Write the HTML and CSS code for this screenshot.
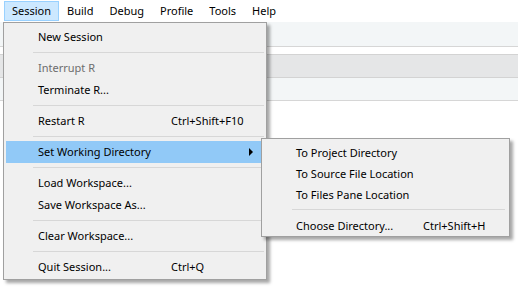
FILE: index.html
```html
<!DOCTYPE html>
<html lang="en">

<head>
    <meta charset="UTF-8">
    <title>Session menu</title>
    <link rel="stylesheet" href="styles.css">
</head>

<body>
    <div class="menubar">
        <span class="menubar-item open">Session</span>
        <span class="menubar-item">Build</span>
        <span class="menubar-item">Debug</span>
        <span class="menubar-item">Profile</span>
        <span class="menubar-item">Tools</span>
        <span class="menubar-item">Help</span>
    </div>
    <div class="toolbar"></div>
    <div class="gap"></div>
    <div class="tabbar"></div>
    <div class="strip"></div>

    <!-- Session 下拉菜单 -->
    <ul class="menu main-menu">
        <li class="item">New Session</li>
        <li class="sep"></li>
        <li class="item disabled">Interrupt R</li>
        <li class="item">Terminate R...</li>
        <li class="sep"></li>
        <li class="item"><span class="label">Restart R</span><span class="key">Ctrl+Shift+F10</span></li>
        <li class="sep"></li>
        <li class="item active">Set Working Directory<i class="arrow"></i></li>
        <li class="sep"></li>
        <li class="item">Load Workspace...</li>
        <li class="item">Save Workspace As...</li>
        <li class="sep"></li>
        <li class="item">Clear Workspace...</li>
        <li class="sep"></li>
        <li class="item"><span class="label">Quit Session...</span><span class="key">Ctrl+Q</span></li>
    </ul>

    <!-- 子菜单 -->
    <ul class="menu sub-menu">
        <li class="item">To Project Directory</li>
        <li class="item">To Source File Location</li>
        <li class="item">To Files Pane Location</li>
        <li class="sep"></li>
        <li class="item"><span class="label">Choose Directory...</span><span class="key">Ctrl+Shift+H</span></li>
    </ul>
</body>

</html>
```

FILE: styles.css
```css
* {
    margin: 0;
    padding: 0;
    box-sizing: border-box;
}

ul li {
    list-style: none;
}

body {
    width: 518px;
    height: 305px;
    overflow: hidden;
    background: #fff;
    font-family: "Noto Sans", "Liberation Sans", sans-serif;
    font-size: 11px;
    color: #000;
    position: relative;
}

.menubar {
    height: 22px;
    display: flex;
    align-items: center;
    padding-left: 4px;
}

.menubar-item {
    height: 20px;
    line-height: 18px;
    padding: 0 7px;
    border: 1px solid transparent;
}

.menubar-item.open {
    background: #cce8ff;
    border-color: #99d1ff;
}

.toolbar {
    height: 25px;
    background: #f3f6f7;
    border-bottom: 1px solid #d6d6d6;
}

.gap {
    height: 7px;
}

.tabbar {
    height: 24px;
    background: #e5e6e7;
    border-top: 1px solid #d3d3d3;
    border-bottom: 1px solid #d3d3d3;
}

.strip {
    height: 23px;
    background: #f3f6f7;
    border-bottom: 1px solid #d6d6d6;
}

.menu {
    position: absolute;
    background: #f0f0f0;
    border: 1px solid #a0a0a0;
    box-shadow: 3px 3px 3px rgba(0, 0, 0, 0.35);
}

.main-menu {
    left: 3px;
    top: 22px;
    width: 264px;
    padding: 3px 5px 1px 2px;
}

.sub-menu {
    left: 261px;
    top: 138px;
    width: 249px;
    padding: 3px 2px 0 2px;
}

.menu .item {
    height: 22px;
    line-height: 22px;
    padding-left: 32px;
    display: flex;
    position: relative;
    white-space: nowrap;
}

.sub-menu .item {
    height: 21px;
    line-height: 21px;
}

.menu .label {
    width: 133px;
}

.sub-menu .label {
    width: 127px;
}

.menu .item.disabled {
    color: #6d6d6d;
}

.menu .item.active {
    background: #91c9f7;
}

.menu .sep {
    height: 1px;
    background: #d7d7d7;
    margin: 4px -3px 4px 27px;
}

.sub-menu .sep {
    margin: 4px 2px 5px 28px;
}

.arrow {
    position: absolute;
    right: 8px;
    top: 7px;
    width: 0;
    height: 0;
    border-top: 4px solid transparent;
    border-bottom: 4px solid transparent;
    border-left: 4px solid #000;
}
```
